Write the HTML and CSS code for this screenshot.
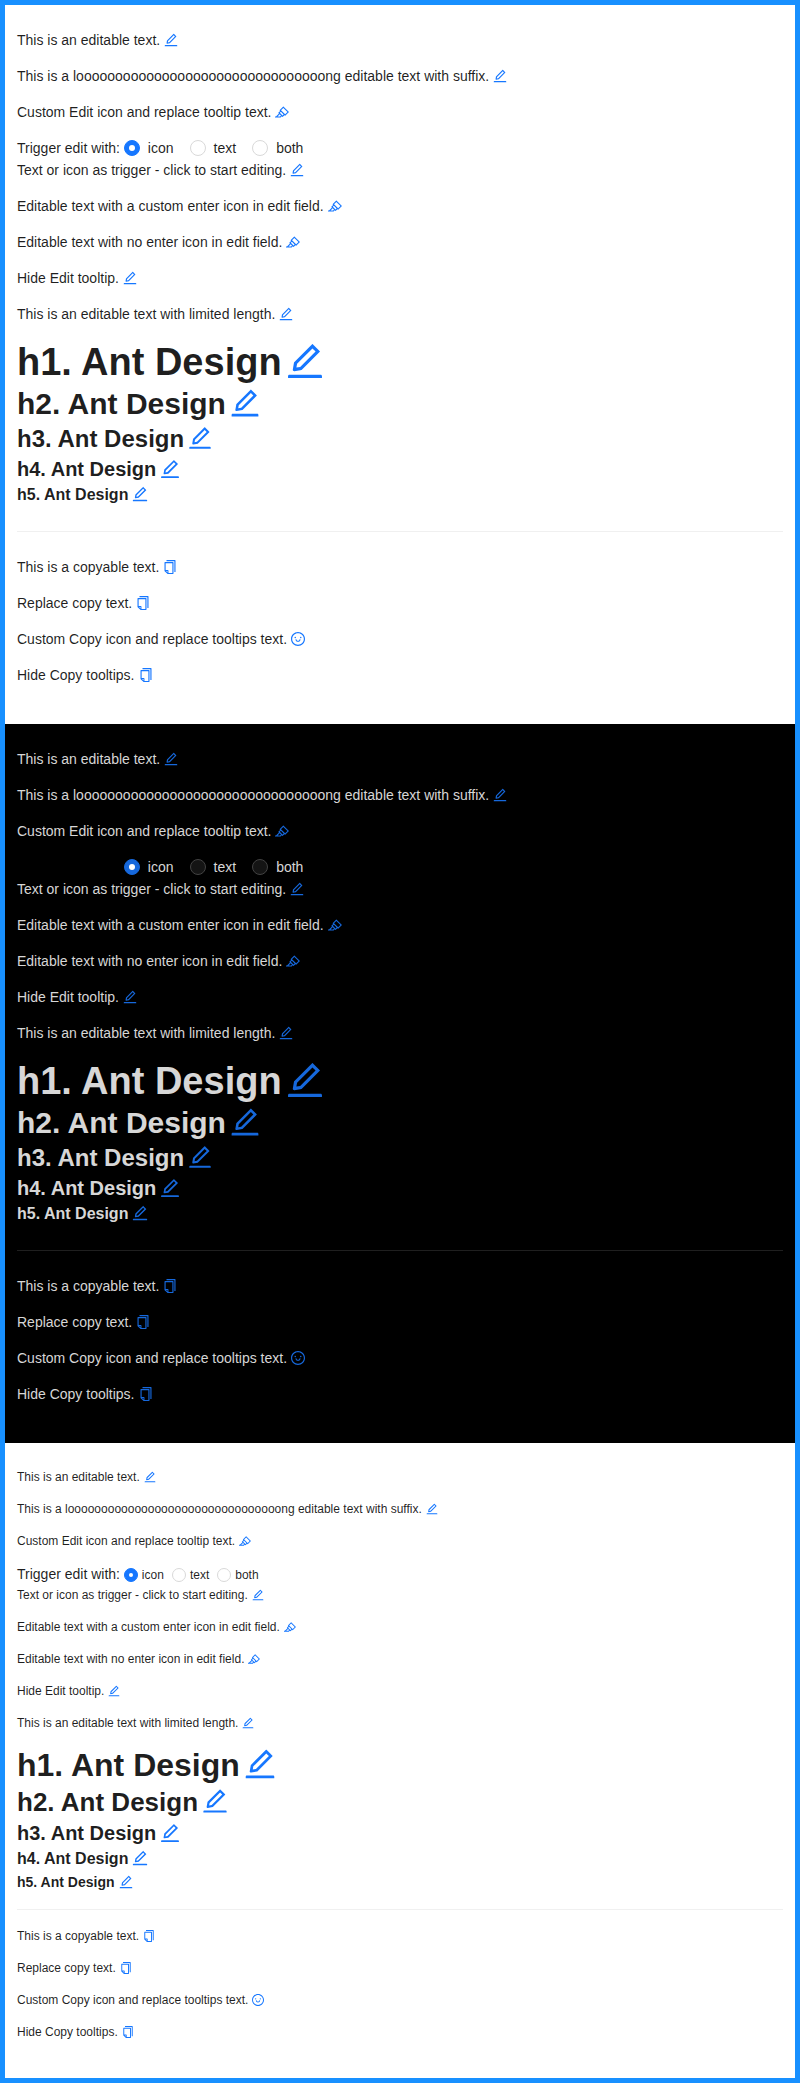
FILE: index.html
```
<!DOCTYPE html>
<html lang="en">
<head>
<meta charset="utf-8">
<title>Typography</title>
<link rel="stylesheet" href="styles.css">
</head>
<body>
<svg class="sprite" aria-hidden="true">
  <symbol id="edit" viewBox="64 64 896 896"><path d="M257.7 752c2 0 4-.2 6-.5L431.9 722c2-.4 3.9-1.3 5.3-2.8l423.9-423.9a9.96 9.96 0 000-14.1L694.9 114.9c-1.9-1.9-4.4-2.9-7.1-2.9s-5.2 1-7.1 2.9L256.8 538.8c-1.5 1.5-2.4 3.3-2.8 5.3l-29.5 168.2a33.5 33.5 0 009.4 29.8c6.6 6.4 14.9 9.9 23.8 9.9zm67.4-174.4L687.8 215l73.3 73.3-362.7 362.6-88.9 15.7 15.6-89zM880 836H144c-17.7 0-32 14.3-32 32v36c0 4.4 3.6 8 8 8h784c4.4 0 8-3.6 8-8v-36c0-17.7-14.3-32-32-32z"/></symbol>
  <symbol id="highlight" viewBox="64 64 896 896"><path d="M957.6 507.4L603.2 158.2a7.9 7.9 0 00-11.2 0L353.3 393.4a8.03 8.03 0 00-.1 11.3l.1.1 40 39.4-117.2 115.3a8.03 8.03 0 00-.1 11.3l.1.1 39.5 38.9-189.1 187H72.1c-4.4 0-8.1 3.6-8.1 8V860c0 4.4 3.6 8 8 8h344.9c2.1 0 4.1-.8 5.6-2.3l76.1-75.6 40.4 39.8a7.9 7.9 0 0011.2 0l117.1-115.6 40.1 39.5a7.9 7.9 0 0011.2 0l238.7-235.2c3.4-3 3.4-8 .3-11.2zM389.8 796.2H229.6l134.4-133 80.1 78.9-54.3 54.1zm154.8-62.1L373.2 565.2l68.6-67.6 171.4 168.9-68.6 67.6zM713.1 658L450.3 399.1 597.6 254l262.8 259-147.3 145z"/></symbol>
  <symbol id="copy" viewBox="64 64 896 896"><path d="M832 64H296c-4.4 0-8 3.6-8 8v56c0 4.4 3.6 8 8 8h496v688c0 4.4 3.6 8 8 8h56c4.4 0 8-3.6 8-8V96c0-17.7-14.3-32-32-32zM704 192H192c-17.7 0-32 14.3-32 32v530.7c0 8.5 3.4 16.6 9.4 22.6l173.3 173.3c2.2 2.2 4.7 4 7.4 5.5v1.9h4.2c3.5 1.3 7.2 2 11 2H704c17.7 0 32-14.3 32-32V224c0-17.7-14.3-32-32-32zM350 856.2L263.9 770H350v86.2zM664 888H414V746c0-22.1-17.9-40-40-40H232V264h432v624z"/></symbol>
  <symbol id="smile" viewBox="64 64 896 896"><path d="M288 421a48 48 0 1096 0 48 48 0 10-96 0zm352 0a48 48 0 1096 0 48 48 0 10-96 0zM512 64C264.6 64 64 264.6 64 512s200.6 448 448 448 448-200.6 448-448S759.4 64 512 64zm263 711c-34.2 34.2-74 61-118.3 79.8C611 874.2 562.3 884 512 884c-50.3 0-99-9.8-144.8-29.2A370.4 370.4 0 01248.9 775c-34.2-34.2-61-74-79.8-118.3C149.8 611 140 562.3 140 512s9.8-99 29.2-144.8A370.4 370.4 0 01249 248.9c34.2-34.2 74-61 118.3-79.8C413 149.8 461.7 140 512 140c50.3 0 99 9.8 144.8 29.2A370.4 370.4 0 01775.1 249c34.2 34.2 61 74 79.8 118.3C874.2 413 884 461.7 884 512s-9.8 99-29.2 144.8A368.89 368.89 0 01775 775zM664 533h-48.1c-4.2 0-7.8 3.2-8.1 7.4C604 589.9 562.5 629 512 629s-92.1-39.1-95.8-88.6c-.3-4.2-3.9-7.4-8.1-7.4H360a8 8 0 00-8 8.4c4.4 84.3 74.5 151.6 160 151.6s155.6-67.3 160-151.6a8 8 0 00-8-8.4z"/></symbol>
</svg>

<section class="theme">
  <p class="text">This is an editable text.<svg class="icon"><use href="#edit"/></svg></p>
  <p class="text">This is a loooooooooooooooooooooooooooooooong editable text with suffix.<svg class="icon"><use href="#edit"/></svg></p>
  <p class="text">Custom Edit icon and replace tooltip text.<svg class="icon"><use href="#highlight"/></svg></p>
  <div class="trigger">Trigger edit with: <span class="group"><label class="option"><span class="radio checked"></span><span class="label">icon</span></label><label class="option"><span class="radio"></span><span class="label">text</span></label><label class="option"><span class="radio"></span><span class="label">both</span></label></span></div>
  <p class="text">Text or icon as trigger - click to start editing.<svg class="icon"><use href="#edit"/></svg></p>
  <p class="text">Editable text with a custom enter icon in edit field.<svg class="icon"><use href="#highlight"/></svg></p>
  <p class="text">Editable text with no enter icon in edit field.<svg class="icon"><use href="#highlight"/></svg></p>
  <p class="text">Hide Edit tooltip.<svg class="icon"><use href="#edit"/></svg></p>
  <p class="text">This is an editable text with limited length.<svg class="icon"><use href="#edit"/></svg></p>
  <h1 class="title t1">h1. Ant Design<svg class="icon"><use href="#edit"/></svg></h1>
  <h2 class="title t2">h2. Ant Design<svg class="icon"><use href="#edit"/></svg></h2>
  <h3 class="title t3">h3. Ant Design<svg class="icon"><use href="#edit"/></svg></h3>
  <h4 class="title t4">h4. Ant Design<svg class="icon"><use href="#edit"/></svg></h4>
  <h5 class="title t5">h5. Ant Design<svg class="icon"><use href="#edit"/></svg></h5>
  <div class="divider"></div>
  <p class="text">This is a copyable text.<svg class="icon"><use href="#copy"/></svg></p>
  <p class="text">Replace copy text.<svg class="icon"><use href="#copy"/></svg></p>
  <p class="text">Custom Copy icon and replace tooltips text.<svg class="icon"><use href="#smile"/></svg></p>
  <p class="text">Hide Copy tooltips.<svg class="icon"><use href="#copy"/></svg></p>
</section>

<section class="theme dark">
  <p class="text">This is an editable text.<svg class="icon"><use href="#edit"/></svg></p>
  <p class="text">This is a loooooooooooooooooooooooooooooooong editable text with suffix.<svg class="icon"><use href="#edit"/></svg></p>
  <p class="text">Custom Edit icon and replace tooltip text.<svg class="icon"><use href="#highlight"/></svg></p>
  <div class="trigger">Trigger edit with: <span class="group"><label class="option"><span class="radio checked"></span><span class="label">icon</span></label><label class="option"><span class="radio"></span><span class="label">text</span></label><label class="option"><span class="radio"></span><span class="label">both</span></label></span></div>
  <p class="text">Text or icon as trigger - click to start editing.<svg class="icon"><use href="#edit"/></svg></p>
  <p class="text">Editable text with a custom enter icon in edit field.<svg class="icon"><use href="#highlight"/></svg></p>
  <p class="text">Editable text with no enter icon in edit field.<svg class="icon"><use href="#highlight"/></svg></p>
  <p class="text">Hide Edit tooltip.<svg class="icon"><use href="#edit"/></svg></p>
  <p class="text">This is an editable text with limited length.<svg class="icon"><use href="#edit"/></svg></p>
  <h1 class="title t1">h1. Ant Design<svg class="icon"><use href="#edit"/></svg></h1>
  <h2 class="title t2">h2. Ant Design<svg class="icon"><use href="#edit"/></svg></h2>
  <h3 class="title t3">h3. Ant Design<svg class="icon"><use href="#edit"/></svg></h3>
  <h4 class="title t4">h4. Ant Design<svg class="icon"><use href="#edit"/></svg></h4>
  <h5 class="title t5">h5. Ant Design<svg class="icon"><use href="#edit"/></svg></h5>
  <div class="divider"></div>
  <p class="text">This is a copyable text.<svg class="icon"><use href="#copy"/></svg></p>
  <p class="text">Replace copy text.<svg class="icon"><use href="#copy"/></svg></p>
  <p class="text">Custom Copy icon and replace tooltips text.<svg class="icon"><use href="#smile"/></svg></p>
  <p class="text">Hide Copy tooltips.<svg class="icon"><use href="#copy"/></svg></p>
</section>

<section class="theme compact">
  <p class="text">This is an editable text.<svg class="icon"><use href="#edit"/></svg></p>
  <p class="text">This is a loooooooooooooooooooooooooooooooong editable text with suffix.<svg class="icon"><use href="#edit"/></svg></p>
  <p class="text">Custom Edit icon and replace tooltip text.<svg class="icon"><use href="#highlight"/></svg></p>
  <div class="trigger">Trigger edit with: <span class="group"><label class="option"><span class="radio checked"></span><span class="label">icon</span></label><label class="option"><span class="radio"></span><span class="label">text</span></label><label class="option"><span class="radio"></span><span class="label">both</span></label></span></div>
  <p class="text">Text or icon as trigger - click to start editing.<svg class="icon"><use href="#edit"/></svg></p>
  <p class="text">Editable text with a custom enter icon in edit field.<svg class="icon"><use href="#highlight"/></svg></p>
  <p class="text">Editable text with no enter icon in edit field.<svg class="icon"><use href="#highlight"/></svg></p>
  <p class="text">Hide Edit tooltip.<svg class="icon"><use href="#edit"/></svg></p>
  <p class="text">This is an editable text with limited length.<svg class="icon"><use href="#edit"/></svg></p>
  <h1 class="title t1">h1. Ant Design<svg class="icon"><use href="#edit"/></svg></h1>
  <h2 class="title t2">h2. Ant Design<svg class="icon"><use href="#edit"/></svg></h2>
  <h3 class="title t3">h3. Ant Design<svg class="icon"><use href="#edit"/></svg></h3>
  <h4 class="title t4">h4. Ant Design<svg class="icon"><use href="#edit"/></svg></h4>
  <h5 class="title t5">h5. Ant Design<svg class="icon"><use href="#edit"/></svg></h5>
  <div class="divider"></div>
  <p class="text">This is a copyable text.<svg class="icon"><use href="#copy"/></svg></p>
  <p class="text">Replace copy text.<svg class="icon"><use href="#copy"/></svg></p>
  <p class="text">Custom Copy icon and replace tooltips text.<svg class="icon"><use href="#smile"/></svg></p>
  <p class="text">Hide Copy tooltips.<svg class="icon"><use href="#copy"/></svg></p>
</section>
</body>
</html>
```

FILE: styles.css
```
* { box-sizing: border-box; }

body {
  margin: 0;
  border: 5px solid #1890ff;
  font-family: "Liberation Sans", Arial, sans-serif;
  font-size: 14px;
  line-height: 22px;
  color: rgba(0, 0, 0, 0.88);
}

.sprite { display: none; }

.theme {
  --primary: #1677ff;
  --text: rgba(0, 0, 0, 0.88);
  --line: rgba(5, 5, 5, 0.06);
  --radio-bg: #fff;
  --radio-border: #d9d9d9;
  --radio-size: 16px;
  --dot: 6px;
  --gap: 8px;
  --size: 14px;
  --leading: 22px;
  --divider-gap: 24px;
  display: flow-root;
  padding: 24px 12px;
  background: #fff;
}

.dark {
  --primary: #1668dc;
  --text: rgba(255, 255, 255, 0.85);
  --line: rgba(253, 253, 253, 0.12);
  --radio-bg: #141414;
  --radio-border: #424242;
  background: #000;
}

.compact {
  --radio-size: 14px;
  --dot: 4px;
  --gap: 4px;
  --size: 12px;
  --leading: 20px;
  --divider-gap: 16px;
}

.text {
  margin: 0 0 1em;
  font-size: var(--size);
  line-height: var(--leading);
  color: var(--text);
}

.icon {
  width: 1em;
  height: 1em;
  margin-left: 4px;
  vertical-align: -0.125em;
  fill: var(--primary);
}

.trigger { height: 22px; white-space: nowrap; }

.group { font-size: 0; }

.option {
  display: inline-flex;
  align-items: baseline;
  margin-right: var(--gap);
  font-size: var(--size);
  line-height: var(--leading);
  color: var(--text);
}

.radio {
  display: flex;
  align-items: center;
  justify-content: center;
  align-self: center;
  width: var(--radio-size);
  height: var(--radio-size);
  border: 1px solid var(--radio-border);
  border-radius: 50%;
  background: var(--radio-bg);
}

.checked { border-color: var(--primary); background: var(--primary); }

.checked::after {
  content: "";
  width: var(--dot);
  height: var(--dot);
  border-radius: 50%;
  background: #fff;
}

.label { padding: 0 var(--gap); }

.title { margin: 0; font-weight: 600; color: var(--text); }
.t1 { font-size: 38px; line-height: 46px; }
.t2 { font-size: 30px; line-height: 38px; }
.t3 { font-size: 24px; line-height: 32px; }
.t4 { font-size: 20px; line-height: 28px; }
.t5 { font-size: 16px; line-height: 24px; }

.compact .t1 { font-size: 32px; line-height: 40px; }
.compact .t2 { font-size: 26px; line-height: 34px; }
.compact .t3 { font-size: 20px; line-height: 28px; }
.compact .t4 { font-size: 16px; line-height: 24px; }
.compact .t5 { font-size: 14px; line-height: 22px; }

.divider { height: 1px; margin: var(--divider-gap) 0; background: var(--line); }
```
